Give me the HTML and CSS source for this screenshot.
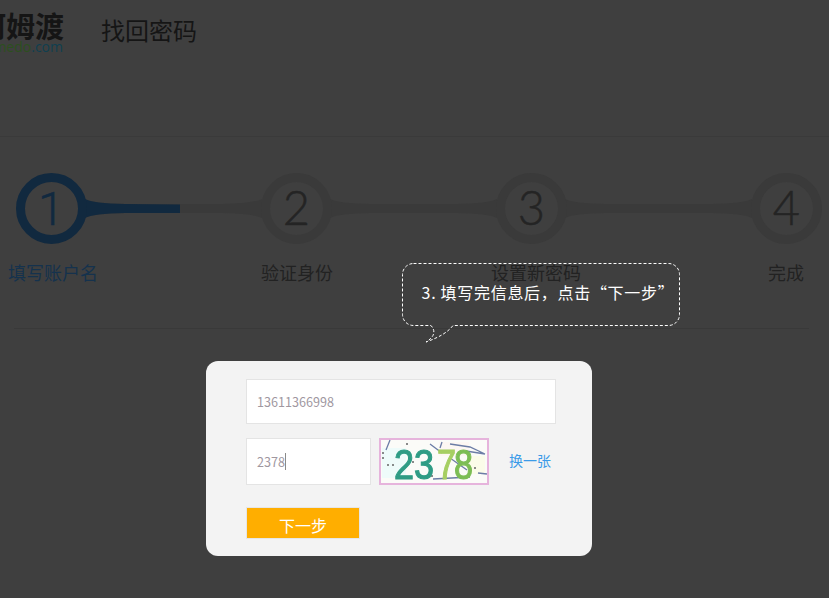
FILE: index.html
```html
<!DOCTYPE html>
<html lang="zh-CN">
<head>
  <meta charset="UTF-8" />
  <title>找回密码</title>
  <link rel="stylesheet" href="styles.css">
</head>
<body>

  <!-- header -->
  <header class="top">
    <div class="logo">
      <div class="logo-name">阿姆渡</div>
      <div class="logo-url"><span class="logo-url-green">amedo</span>.com</div>
    </div>
    <h1 class="top-title">找回密码</h1>
  </header>

  <!-- steps -->
  <svg class="steps" width="829" height="76" viewBox="0 0 829 76">
    <g class="track">
      <path d="M85,29 Q93,33.500 125,34 L222,34 Q254,33.500 262,29 V48 Q254,43.500 222,43 L125,43 Q93,43.500 85,48 Z"/>
      <path d="M330,29 Q338,33.500 370,34 L457,34 Q489,33.500 497,29 V48 Q489,43.500 457,43 L370,43 Q338,43.500 330,48 Z"/>
      <path d="M565,29 Q573,33.500 605,34 L712,34 Q744,33.500 752,29 V48 Q744,43.500 712,43 L605,43 Q573,43.500 565,48 Z"/>
      <circle class="ring" cx="296.500" cy="38.500" r="31"/>
      <circle class="ring" cx="531.500" cy="38.500" r="31"/>
      <circle class="ring" cx="786.500" cy="38.500" r="31"/>
    </g>
    <g class="track-on">
      <path d="M85,29 Q93,33.500 125,34 L180,34.500 V43 L125,43 Q93,43.500 85,48 Z"/>
      <circle class="ring" cx="51.500" cy="38.500" r="31"/>
    </g>
    <text class="num num-on" x="51" y="55">1</text>
    <text class="num" x="296.500" y="55">2</text>
    <text class="num" x="531.500" y="55">3</text>
    <text class="num" x="786.500" y="55">4</text>
  </svg>

  <div class="step-names">
    <span class="step-name step-name-on">填写账户名</span>
    <span class="step-name step-b">验证身份</span>
    <span class="step-name step-c">设置新密码</span>
    <span class="step-name step-d">完成</span>
  </div>
  <div class="line"></div>

  <!-- guide bubble -->
  <div class="tip">
    <svg class="tip-shape" width="284" height="84" viewBox="0 0 284 84">
      <path d="M14.500,0.500 H269.500 A11,11 0 0 1 280.500,11.500 V51.500 A11,11 0 0 1 269.500,62.500 H54 C49,69 41,74 27,79 C37,73 36,67 32,62.500 H14.500 A11,11 0 0 1 3.500,51.500 V11.500 A11,11 0 0 1 14.500,0.500 Z"/>
    </svg>
    <div class="tip-text">3. 填写完信息后，点击“下一步”</div>
  </div>

  <!-- form -->
  <form class="box">
    <div class="field field-wide">13611366998</div>
    <div class="code-row">
      <div class="field field-code">2378<span class="caret"></span></div>
      <svg class="captcha" width="110" height="47" viewBox="0 0 110 47">
        <rect x="1" y="1" width="108" height="45" fill="#fbfbf8" stroke="#e6b4dc" stroke-width="2"/>
        <rect x="3" y="10" width="24" height="30" fill="#eefbfa"/>
        <rect x="60" y="4" width="30" height="14" fill="#fdf7f3"/>
        <rect x="90" y="18" width="16" height="18" fill="#fbfce9"/>
        <path d="M11,2 L7,12 M51,6 L63,15 M63,4 L61,10 M71,6 L91,9 L106,16 M87,13 L106,16 M71,20 L88,32 M54,41 L91,39 M99,35 L108,36" fill="none" stroke="#6c7da6" stroke-width="1.300"/>
        <path d="M3,15 h2 M3,20 h2 M8,27 h2 M13,27 h2 M27,6 h2 M95,30 h2 M33,24 h2 M52,38 h2" fill="none" stroke="#666" stroke-width="1.500"/>
        <text class="cap cap-a" x="15" y="41" textLength="20" lengthAdjust="spacingAndGlyphs">2</text>
        <text class="cap cap-a" x="35" y="41" textLength="20" lengthAdjust="spacingAndGlyphs">3</text>
        <text class="cap cap-b" x="58" y="41" textLength="19" lengthAdjust="spacingAndGlyphs">7</text>
        <text class="cap cap-c" x="75" y="41" textLength="19" lengthAdjust="spacingAndGlyphs">8</text>
      </svg>
      <a class="swap" href="#">换一张</a>
    </div>
    <button class="next" type="button">下一步</button>
  </form>

</body>
</html>
```

FILE: styles.css
```css
body {
  margin: 0;
  width: 829px;
  height: 598px;
  overflow: hidden;
  position: relative;
  background-color: #3f3f3f;
  font-family: "Noto Sans CJK SC", "Noto Sans", sans-serif;
}

.top {
  height: 136px;
  display: flex;
  align-items: flex-start;
  border-bottom: 1px solid #3a3a3a;
}

.logo {
  width: 86px;
  margin-left: -23px;
  padding-top: 10px;
  text-align: right;
  flex-shrink: 0;
}

.logo-name {
  font-size: 29px;
  line-height: 30px;
  font-weight: bold;
  color: #151515;
  white-space: nowrap;
}

.logo-url {
  font-family: "Open Sans", sans-serif;
  font-size: 14px;
  line-height: 13px;
  color: #0f3f50;
}

.logo-url-green {
  color: #2c4f1e;
}

.top-title {
  margin: 12px 0 0 38px;
  font-size: 24px;
  line-height: 35px;
  font-weight: normal;
  color: #151515;
}

/* steps */
.steps {
  display: block;
  margin-top: 33px;
}

.track path {
  fill: #3a3a3a;
}

.track .ring {
  fill: none;
  stroke: #3a3a3a;
  stroke-width: 9px;
}

.track-on path {
  fill: #11293f;
}

.track-on .ring {
  fill: none;
  stroke: #11293f;
  stroke-width: 9px;
}

.num {
  font-family: "Lato", sans-serif;
  font-size: 47px;
  font-weight: 300;
  text-anchor: middle;
  fill: #242424;
  stroke: #242424;
  stroke-width: 0.5px;
}

.num-on {
  font-family: "Roboto", sans-serif;
  fill: #11293f;
  stroke: #11293f;
}

.step-names {
  display: flex;
  padding: 8px 0 0 8px;
  height: 36px;
}

.step-name {
  font-size: 18px;
  line-height: 36px;
  color: #222222;
  white-space: nowrap;
}

.step-name-on {
  color: #15324d;
}

.step-b {
  margin-left: 163px;
}

.step-c {
  margin-left: 158px;
}

.step-d {
  margin-left: 187px;
}

.line {
  margin: 38px 20px 0 14px;
  height: 1px;
  background-color: #393939;
}

/* bubble */
.tip {
  position: absolute;
  left: 399px;
  top: 263px;
  width: 284px;
  height: 84px;
}

.tip-shape {
  display: block;
}

.tip-shape path {
  fill: none;
  stroke: #ffffff;
  stroke-width: 1px;
  stroke-dasharray: 3 2;
}

.tip-text {
  position: absolute;
  left: 7px;
  top: 17px;
  width: 284px;
  text-align: center;
  font-size: 16px;
  line-height: 24px;
  letter-spacing: 0.7px;
  color: #ffffff;
  white-space: nowrap;
}

/* form */
.box {
  position: absolute;
  left: 206px;
  top: 361px;
  width: 306px;
  height: 177px;
  padding: 18px 40px 0 40px;
  background-color: #f3f3f3;
  border-radius: 12px;
}

.field {
  box-sizing: border-box;
  background-color: #ffffff;
  border: 1px solid #e4e4e4;
  padding-left: 10px;
  font-size: 12.6px;
  color: #a0979f;
  display: flex;
  align-items: center;
}

.field-wide {
  width: 310px;
  height: 45px;
}

.code-row {
  display: flex;
  align-items: center;
  margin-top: 14px;
}

.field-code {
  width: 125px;
  height: 47px;
}

.caret {
  width: 1px;
  height: 17px;
  background-color: #8a8a8a;
}

.captcha {
  display: block;
  margin-left: 8px;
  filter: blur(0.5px);
}

.cap {
  font-family: "Liberation Sans", sans-serif;
  font-size: 42px;
  stroke-width: 1.2px;
}

.cap-a {
  fill: #2f9c85;
  stroke: #2f9c85;
}

.cap-b {
  fill: #a6cf63;
  stroke: #a6cf63;
}

.cap-c {
  fill: #7cbd55;
  stroke: #7cbd55;
}

.swap {
  margin: -3px 0 0 20px;
  font-size: 14px;
  color: #3b9be8;
  text-decoration: none;
}

.next {
  display: block;
  width: 114px;
  height: 32px;
  margin-top: 22px;
  padding: 4px 0 0 0;
  background-color: #ffae00;
  border: 1px solid #e6e6e6;
  font-family: "Noto Sans CJK SC", sans-serif;
  font-size: 16px;
  color: #ffffff;
}
```
